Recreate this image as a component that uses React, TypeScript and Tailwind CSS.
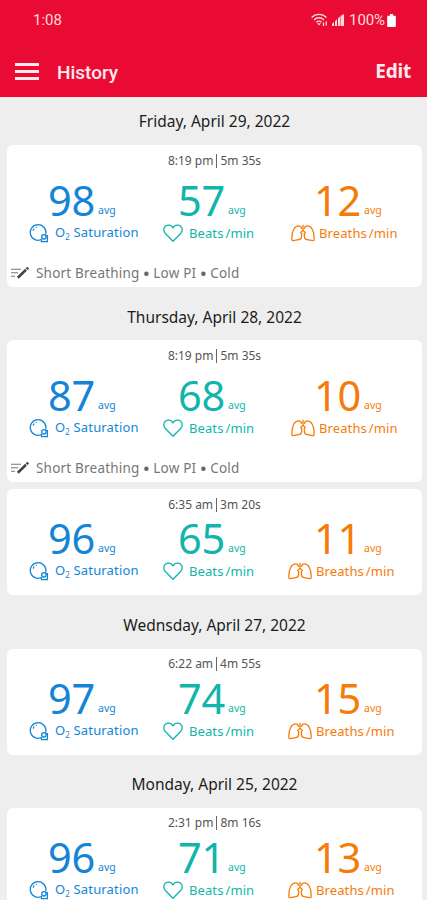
import React from 'react'
import clsx from 'clsx'

interface Reading {
  time: string
  duration: string
  oxygen: number
  beats: number
  breaths: number
  notes?: string[]
}

interface HistoryDay {
  date: string
  readings: Reading[]
}

const days: HistoryDay[] = [
  {
    date: 'Friday, April 29, 2022',
    readings: [
      { time: '8:19 pm', duration: '5m 35s', oxygen: 98, beats: 57, breaths: 12, notes: ['Short Breathing', 'Low PI', 'Cold'] }
    ]
  },
  {
    date: 'Thursday, April 28, 2022',
    readings: [
      { time: '8:19 pm', duration: '5m 35s', oxygen: 87, beats: 68, breaths: 10, notes: ['Short Breathing', 'Low PI', 'Cold'] },
      { time: '6:35 am', duration: '3m 20s', oxygen: 96, beats: 65, breaths: 11 }
    ]
  },
  {
    date: 'Wednsday, April 27, 2022',
    readings: [
      { time: '6:22 am', duration: '4m 55s', oxygen: 97, beats: 74, breaths: 15 }
    ]
  },
  {
    date: 'Monday, April 25, 2022',
    readings: [
      { time: '2:31 pm', duration: '8m 16s', oxygen: 96, beats: 71, breaths: 13 }
    ]
  }
]

const OxygenIcon = () => (
  <svg className="w-5 h-5 shrink-0" viewBox="0 0 20 20" fill="none" stroke="currentColor" strokeWidth="1.3">
    <path d="M12.800 16.300A7.800 7.800 0 1 1 16.600 11.500" />
    <path d="M4.200 7.600A5 5 0 0 1 5.200 5.700M6.800 4.500l.9-.4" />
    <circle cx="14.900" cy="13.800" r="2.200" />
    <path d="M17.100 12.600h1.300v6.100h-6v-2.300" />
  </svg>
)

const HeartIcon = () => (
  <svg className="w-5 h-5 shrink-0" viewBox="0 0 20 20" fill="none" stroke="currentColor" strokeWidth="1.3" strokeLinejoin="round">
    <path d="M10 18.300 2.100 10.200C-.3 7.100.9 2.600 4.900 2.100 7.400 1.800 9.100 3.100 10 4.900c.9-1.800 2.600-3.100 5.100-2.800 4 .5 5.200 5 2.800 8.100Z" />
  </svg>
)

const LungsIcon = () => (
  <svg className="w-6 h-[18px] shrink-0" viewBox="0 0 24 18" fill="none" stroke="currentColor" strokeWidth="1.3" strokeLinejoin="round">
    <path d="M10.600 4.800C10.300 2.900 9.300 1.900 7.600 1.900 3.600 1.900.9 6.900.9 13.500v2.100c0 .8.4 1.100 1.200 1l5.800-.9c1.900-.3 2.700-1.300 2.700-3.200V9" />
    <path d="M13.400 4.800c.3-1.900 1.300-2.900 3-2.900 4 0 6.700 5 6.700 11.600v2.100c0 .8-.4 1.100-1.200 1l-5.800-.9c-1.900-.3-2.700-1.300-2.700-3.200V9" />
    <path d="M12 .8v5.500L9.200 8.900M12 6.300l2.800 2.600" />
  </svg>
)

const NoteIcon = () => (
  <svg className="w-[18px] h-3 shrink-0" viewBox="0 0 18 12" fill="none" stroke="currentColor">
    <path d="M0 2.200h10M0 5.700h7M0 9.200h4" strokeWidth="1.100" />
    <path d="M6.800 10.700 15 2.800" stroke="#444" strokeWidth="2.600" />
    <path d="m15.600 2.200 1.600-1.600" stroke="#444" strokeWidth="2.600" />
  </svg>
)

interface MetricProps {
  value: number
  label: React.ReactNode
  icon: React.ReactNode
  className: string
  valueClass: string
  labelClass: string
}

const Metric: React.FC<MetricProps> = ({ value, label, icon, className, valueClass, labelClass }) => (
  <div className={className}>
    <div className={clsx('flex h-[30px] items-center', valueClass)}>
      <span className="w-[50px] text-[41.5px] leading-[30px] tracking-[-0.3px]">{value}</span>
      <span className="pt-5 text-[10.5px] leading-4">avg</span>
    </div>
    <div className={clsx('flex h-9 items-center whitespace-nowrap text-[13px] leading-5', labelClass)}>
      {icon}
      <span>{label}</span>
    </div>
  </div>
)

const ReadingCard: React.FC<{ reading: Reading }> = ({ reading }) => {
  const hasNotes = !!reading.notes

  return (
    <div className={clsx('rounded-md bg-white', hasNotes ? 'h-[142px]' : 'h-[106px]')}>
      <div className="flex h-[31px] items-center justify-center text-[12px] text-[#555]">
        {reading.time}
        <span className="mx-[3px] h-[14px] w-px bg-[#666]" />
        {reading.duration}
      </div>
      <div className={clsx('grid grid-cols-[134px_127px_1fr] pl-[22px]', hasNotes ? 'pt-[9px]' : 'pt-[3px]')}>
        <Metric
          className="text-[#1485d6]"
          valueClass="pl-[19px]"
          labelClass="gap-[6px] tracking-[0.15px]"
          value={reading.oxygen}
          icon={<OxygenIcon />}
          label={<>O<span className="relative top-[3px] text-[8px]">2</span> Saturation</>}
        />
        <Metric
          className="text-[#12b5ac]"
          valueClass="pl-[15px]"
          labelClass="gap-[6px] tracking-[0.1px] [word-spacing:-1.5px]"
          value={reading.beats}
          icon={<HeartIcon />}
          label="Beats /min"
        />
        <Metric
          className="text-[#f57c0a]"
          valueClass="pl-[24px]"
          labelClass={clsx('gap-1 tracking-[0.1px] [word-spacing:-1.5px]', hasNotes ? 'pl-px' : '-ml-[2px]')}
          value={reading.breaths}
          icon={<LungsIcon />}
          label="Breaths /min"
        />
      </div>
      {reading.notes && (
        <div className="flex items-center gap-[7px] pl-[4px] pt-[12px] text-[13.5px] leading-5 text-[#777]">
          <NoteIcon />
          <span className="flex gap-1 tracking-[0.2px]">
            {reading.notes.map((note, index) => (
              <React.Fragment key={note}>
                {index > 0 && <span className="text-[15px] font-bold text-[#666]">•</span>}
                <span>{note}</span>
              </React.Fragment>
            ))}
          </span>
        </div>
      )}
    </div>
  )
}

const StatusBar = () => (
  <div className="flex h-10 items-center justify-between pl-[33px] pr-[31px] font-['Roboto',sans-serif] text-[15px] text-[#ffd9dc]">
    <span>1:08</span>
    <div className="flex items-center">
      <svg className="mr-1 h-[14px] w-[17px]" viewBox="0 0 17 14" fill="none" stroke="currentColor" strokeWidth="1.300">
        <path d="M.6 4.500C4.500.3 11.500.3 15.400 4.500M3 7c2.800-3 7.200-3 10 0M5.300 9.300c1.500-1.500 3.800-1.500 5.200 0" />
        <path d="m6.500 10.500 1.500 1.700 1.500-1.700Z" fill="currentColor" strokeWidth=".5" />
        <path d="M12.500 13V9.500M15.300 8.500v4" />
      </svg>
      <svg className="mr-[5px] h-3 w-3" viewBox="0 0 12 12" fill="currentColor">
        <path d="M0 12v-2l2-2v4ZM3 12V7.300l2-2V12ZM6 12V4.500l2-2V12ZM8.500 12V2l3.500-2v12Z" />
      </svg>
      <span className="tracking-[-0.1px]">100%</span>
      <svg className="ml-[2px] h-[13px] w-[9px]" viewBox="0 0 8 12" fill="#fff">
        <path d="M2.500 0h3v1.500H7c.6 0 1 .4 1 1V11c0 .6-.4 1-1 1H1c-.6 0-1-.4-1-1V2.500c0-.6.4-1 1-1h1.500Z" />
      </svg>
    </div>
  </div>
)

const App: React.FC = () => {
  return (
    <div className="h-[900px] w-[427px] overflow-hidden bg-[#eee] font-['Noto_Sans',sans-serif]">
      <header className="h-[97px] bg-[#e90b33]">
        <StatusBar />
        <div className="flex h-[63px] items-center pl-[15px] pr-4 text-[#ffe9eb]">
          <button className="flex w-6 flex-col gap-1" aria-label="Menu">
            <span className="h-[3px] w-full bg-current" />
            <span className="h-[3px] w-full bg-current" />
            <span className="h-[3px] w-full bg-current" />
          </button>
          <h1 className="ml-[18px] pt-[3px] font-['Roboto',sans-serif] text-[19px] font-medium">History</h1>
          <button className="ml-auto text-[19px] font-bold tracking-[-0.2px]">Edit</button>
        </div>
      </header>

      <main className="flex flex-col gap-[5.25px] pl-[7px] pr-[5px]">
        {days.map((day) => (
          <section key={day.date}>
            <h2 className="flex h-[48px] items-center justify-center pt-0.5 text-[15.5px] text-[#1c1c1c]">{day.date}</h2>
            <div className="flex flex-col gap-[7px]">
              {day.readings.map((reading) => (
                <ReadingCard key={reading.time} reading={reading} />
              ))}
            </div>
          </section>
        ))}
      </main>
    </div>
  )
}

export default App
